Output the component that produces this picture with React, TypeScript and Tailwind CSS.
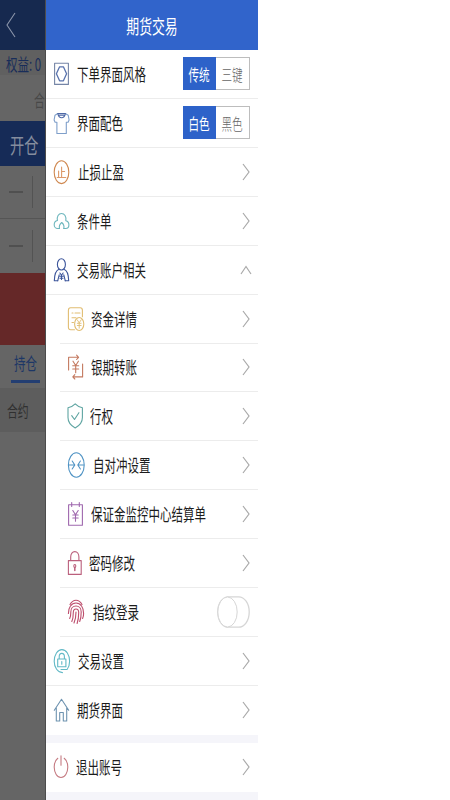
import React from 'react';
import clsx from 'clsx';

const FONT = 'font-["Noto_Sans_CJK_SC",sans-serif]';

/* Every glyph sits in an 18x26 box */
const Glyph: React.FC<{ color: string; children: React.ReactNode }> = ({ color, children }) => (
    <svg
        viewBox="0 0 18 26"
        className={clsx('h-[26px] w-[18px] shrink-0 overflow-visible fill-none', color)}
        stroke="currentColor"
        strokeWidth="1.1"
        strokeLinejoin="round"
        strokeLinecap="round"
    >
        {children}
    </svg>
);

const StyleIcon = () => (
    <Glyph color="text-[#7585a6]">
        <path d="M1.6 2.2h13.8v21.2H1.6z" />
        <path d="M6.6 5.8h3.8l3.2 7-3.2 7H6.6l-3.200-7z" stroke="#5872ad" strokeWidth="1.3" />
    </Glyph>
);

const ShirtIcon = () => (
    <Glyph color="text-[#7f9fca]">
        <path d="M4.800 3.600 2 5.200 1.100 10l1 2.300h1.800v11.200h9.400V12.300h1.800l1-2.300-.9-4.800-2.900-1.600" />
        <path d="M4.800 3.600h7.600c-.6 2.600-2 4.200-3.800 4.200S5.400 6.200 4.800 3.600zM6.300 5.200h4.600" stroke="#4d68a6" />
    </Glyph>
);

const StopIcon = () => (
    <Glyph color="text-[#cf8850]">
        <ellipse cx="8.5" cy="13.2" rx="7.3" ry="11.4" />
        <path d="M8.6 8v10.5M8.6 12.5h3M5.6 12v6.5M4.2 18.5h8.6" stroke="#dd9a6a" />
    </Glyph>
);

const CloudIcon = () => (
    <Glyph color="text-[#6db6bd]">
        <path d="M6.500 20.500H4.600c-1.900 0-3.400-1.500-3.400-3.800 0-2.200 1.200-3.800 3.200-4.200C3.700 8.500 5.500 5.500 8.500 5.500s5 3 4.300 7.200c1.900.4 3.100 1.900 3.100 4 0 2.300-1.400 3.800-3.200 3.800H10.800" />
        <path d="M6.500 20.500c-.6-2.500.3-4.500 2.200-6 1.900 1.500 2.700 3.500 2.100 6" />
    </Glyph>
);

const PersonIcon = () => (
    <Glyph color="text-[#3c559b]">
        <ellipse cx="8.400" cy="7.400" rx="4" ry="5.600" />
        <path d="M6 12.300c-2.800 1-4.500 4-4.700 11.500h3.400M11 12.300c2.800 1 4.500 4 4.700 11.500h-3.400" />
        <path d="m4.700 23.800 1.500-6M12.300 23.800l-1.500-6M6.900 16l1.600 2.300 1.600-2.300M8.500 18.300V22.500M7 19.300h3M7 21.200h3" />
    </Glyph>
);

const FundsIcon = () => (
    <Glyph color="text-[#e1bd72]">
        <path d="M7.500 23.700H3.600c-1.300 0-2.200-.9-2.200-2.500V4.300c0-1.600.9-2.500 2.200-2.500h9.600c1.300 0 2.200.9 2.200 2.500v6.500" />
        <path d="M5 7h1M8 7h5M5 11.800h4M5 16.500h1.500" />
        <ellipse cx="12.200" cy="18" rx="4.600" ry="6.500" />
        <path d="m10.200 13.800 2 3 2-3M12.200 16.800v5.400M10.300 17.300h3.800M10.300 19.500h3.800" strokeWidth=".9" />
    </Glyph>
);

const TransferIcon = () => (
    <Glyph color="text-[#c47a60]">
        <path d="M1.600 16V3.300h9.800M9.600 1.200l2 2.100-2 2.200M15.600 10v12.900H6M7.800 20.700l-2 2.200 2 2.100" />
        <path d="m6 7.200 2.700 4.300 2.700-4.300M8.700 11.500v7.200M5.700 11.800h6M5.700 15h6" />
    </Glyph>
);

const ShieldIcon = () => (
    <Glyph color="text-[#5fa5a2]">
        <path d="M8.200.9C6.300 2.900 3.800 4.200 1 4.800v9.700c0 4.500 3.200 8.300 7.200 10.500 4-2.200 7.200-6 7.200-10.500V4.800C12.600 4.200 10.100 2.900 8.200.9z" />
        <path d="m4.700 12.700 2.800 3.800 4.400-6.800" />
    </Glyph>
);

const HedgeIcon = () => (
    <Glyph color="text-[#4f93c4]">
        <ellipse cx="9.300" cy="13" rx="7.900" ry="12.200" />
        <path d="M2 13h5.600M11 13h5.600M5.200 9l2.600 4-2.600 4M13.400 9l-2.600 4 2.600 4" />
    </Glyph>
);

const BillIcon = () => (
    <Glyph color="text-[#9f68ae]">
        <path d="M1.600 3.800h13.800v20.500H1.600zM4.700 1.500v4M12.300 1.500v4" />
        <path d="m5.800 9.500 2.700 4.300 2.700-4.300M8.500 13.800v6.500M5.800 14h5.400M5.800 17h5.400" />
    </Glyph>
);

const LockIcon = () => (
    <Glyph color="text-[#bb607d]">
        <path d="M1.400 10.600h12.800v13.800H1.400zM3.700 10.600V7c0-3.200 1.700-5.400 4.100-5.400s4.100 2.200 4.100 5.400v3.600" />
        <path d="M7.800 17.500v3" strokeWidth="1.500" />
        <ellipse cx="7.800" cy="16" rx="1" ry="1.500" />
    </Glyph>
);

const FingerprintIcon = () => (
    <Glyph color="text-[#bd4e6d]">
        <path d="M3 5.500C4.500 2.800 6.600 1.200 9 1.200s4.600 1.600 6 4.300M1.400 14.500C1.200 8.500 4.500 4 9 4s7.800 4.500 7.600 10.500c0 2-.3 3.600-1 5" />
        <path d="M2.700 19.500c1.200-2.500 1.100-4.500 1.100-6.500 0-3.500 2.200-6 5.200-6s5.200 2.500 5.200 6c0 4-.4 7-1.500 9.500" />
        <path d="M4.800 22.500c1.300-2.800 1.500-5.500 1.500-9 0-2 1.100-3.500 2.700-3.500s2.700 1.500 2.700 3.500c0 4.500-.5 8-1.600 11M7 24c1.500-3.500 2-7 2-11" />
    </Glyph>
);

const SettingIcon = () => (
    <Glyph color="text-[#62b9c6]">
        <path d="M9.500 24.600C4.800 24.600 1.200 19.500 1.200 13.300 1.200 6.800 4.600 1.600 8.900 1.600s7.700 5.200 7.700 11.700c0 3.400-1 6.200-2.500 8.200H8" />
        <path d="M4.700 11h8.200v7.700H4.700zM6.200 11V8.800c0-2 1-3.400 2.600-3.400s2.600 1.400 2.600 3.400V11M8.800 13.500v2.700" />
    </Glyph>
);

const HomeIcon = () => (
    <Glyph color="text-[#6e93b0]">
        <path d="m1.300 13.300 7.200-11 7.200 11M3.300 11v13h3.400v-8.500h3.600V24h3.400V11" />
    </Glyph>
);

const PowerIcon = () => (
    <Glyph color="text-[#c57b82]">
        <path d="M4.800 4.300C2.600 6 1.200 9.200 1.200 13c0 5.900 3 10.500 6.800 10.500s6.800-4.600 6.800-10.500c0-3.800-1.400-7-3.600-8.700M8 1.800v9.500" />
    </Glyph>
);

interface MenuItem {
    label: string;
    icon: React.FC;
    gap?: string;
    nested?: boolean;
    options?: [string, string];
    end?: 'up' | 'switch';
}

const items: MenuItem[] = [
    { label: '下单界面风格', icon: StyleIcon, options: ['传统', '三键'] },
    { label: '界面配色', icon: ShirtIcon, options: ['白色', '黑色'] },
    { label: '止损止盈', icon: StopIcon, gap: 'ml-[7px]' },
    { label: '条件单', icon: CloudIcon },
    { label: '交易账户相关', icon: PersonIcon, end: 'up' },
    { label: '资金详情', icon: FundsIcon, nested: true },
    { label: '银期转账', icon: TransferIcon, nested: true },
    { label: '行权', icon: ShieldIcon, nested: true, gap: 'ml-[5px]' },
    { label: '自对冲设置', icon: HedgeIcon, nested: true, gap: 'ml-[8px]' },
    { label: '保证金监控中心结算单', icon: BillIcon, nested: true },
    { label: '密码修改', icon: LockIcon, nested: true, gap: 'ml-[4px]' },
    { label: '指纹登录', icon: FingerprintIcon, nested: true, gap: 'ml-[8px]', end: 'switch' },
    { label: '交易设置', icon: SettingIcon, gap: 'ml-[7px]' },
    { label: '期货界面', icon: HomeIcon },
];

const Chevron: React.FC<{ up?: boolean }> = ({ up }) =>
    up ? (
        <svg viewBox="0 0 12 10" className="mr-[6px] h-[10px] w-[12px] shrink-0 fill-none stroke-[#a9a9a9]" strokeWidth="1.2">
            <path d="M1 9 6 1.500 11 9" />
        </svg>
    ) : (
        <svg viewBox="0 0 8 18" className="mr-[8px] h-[18px] w-[8px] shrink-0 fill-none stroke-[#a9a9a9]" strokeWidth="1.2">
            <path d="m1 1 6 8-6 8" />
        </svg>
    );

const Segmented: React.FC<{ options: [string, string] }> = ({ options }) => (
    <div className="mr-[8px] flex h-[33px] w-[67px] shrink-0 border border-[#bdbdbd] text-[16px]">
        <div className="-my-px -ml-px flex w-[33px] items-center justify-center bg-[#2d62c9] text-white">
            <span className="scale-x-[0.66] whitespace-nowrap">{options[0]}</span>
        </div>
        <div className="flex w-[33px] items-center justify-center font-light text-[#666]">
            <span className="scale-x-[0.66] whitespace-nowrap">{options[1]}</span>
        </div>
    </div>
);

const Toggle = () => (
    <svg viewBox="0 0 33 32" className="mr-[8px] h-[32px] w-[33px] shrink-0 fill-white stroke-[#d6d6d6]">
        <rect x=".8" y=".8" width="31.4" height="30.4" rx="10.5" ry="15" strokeWidth="1.3" />
        <ellipse cx="10.5" cy="16" rx="9.7" ry="15" />
    </svg>
);

const Row: React.FC<{ item: MenuItem; line?: boolean }> = ({ item, line = true }) => {
    const Icon = item.icon;
    return (
        <div className={clsx('flex h-[48.93px] shrink-0', item.nested && 'pl-[14px]')}>
            <div className={clsx('flex min-w-0 flex-1 items-center pl-[7px]', line && 'border-b border-[#ececec]')}>
                <Icon />
                <div className={clsx('w-0 min-w-0 flex-1', item.gap ?? 'ml-[6px]')}>
                    <span className="inline-block origin-left scale-x-[0.676] whitespace-nowrap text-[17px] leading-6 text-[#1c1c1c]">
                        {item.label}
                    </span>
                </div>
                {item.options ? <Segmented options={item.options} /> : item.end === 'switch' ? <Toggle /> : <Chevron up={item.end === 'up'} />}
            </div>
        </div>
    );
};

const squeezed = 'inline-block origin-left whitespace-nowrap scale-x-[0.676]';

/* Trading page left visible under the dimmed overlay */
const Backdrop = () => (
    <div className="flex h-full w-[46px] shrink-0 flex-col overflow-hidden border-r border-[#4c4c4c] bg-[#656565]">
        <div className="flex h-[50px] shrink-0 items-center bg-[#16294f] pl-[6px]">
            <svg viewBox="0 0 10 26" className="h-[26px] w-[10px] fill-none stroke-[#8c95aa]" strokeWidth="1.1">
                <path d="M9 1 1 13l8 12" />
            </svg>
        </div>
        <div className="h-[25px] shrink-0 bg-[#606060] pl-[6px] text-[17px] leading-[27px] text-[#192d59]">
            <span className={clsx(squeezed, 'scale-x-[0.64]')}>权益: 0</span>
        </div>
        <div className="h-[46px] shrink-0 pl-[34px] text-[17px] leading-[50px] text-[#484848]">
            <span className="inline-block w-[11px] origin-left scale-x-[0.64]">合</span>
        </div>
        <div className="h-[45px] shrink-0 bg-[#162b57] pl-[10px] text-[21px] leading-[46px] text-[#858d9e]">
            <span className={squeezed}>开仓</span>
        </div>
        <div className="flex h-[53px] shrink-0 items-center border-b border-[#555] pl-[9px]">
            <div className="h-[2px] w-[14px] bg-[#505050]" />
            <div className="ml-[9px] h-[32px] w-px bg-[#535353]" />
        </div>
        <div className="flex h-[54px] shrink-0 items-center pl-[9px]">
            <div className="h-[2px] w-[14px] bg-[#505050]" />
            <div className="ml-[9px] h-[32px] w-px bg-[#535353]" />
        </div>
        <div className="h-[72px] shrink-0 bg-[#652828]" />
        <div className="flex h-[43px] shrink-0 flex-col pl-[14px] text-[17px] leading-[35px] text-[#1d3766]">
            <span className={squeezed}>持仓</span>
            <div className="-ml-[3px] h-[3px] w-[29px] shrink-0 bg-[#233e72]" />
        </div>
        <div className="h-[44px] shrink-0 bg-[#5d5d5d] pl-[7px] text-[16px] leading-[44px] text-[#303030]">
            <span className={squeezed}>合约</span>
        </div>
    </div>
);

export default function App() {
    return (
        <div className={clsx('flex h-[800px] w-[450px] overflow-hidden bg-white', FONT)}>
            <Backdrop />
            <div className="flex h-full w-[212px] flex-col overflow-hidden bg-[#f5f5fa]">
                <header className="flex h-[50px] shrink-0 items-center justify-center bg-[#3164cb] pt-[2px] text-[19px] text-white">
                    <span className="scale-x-[0.676] whitespace-nowrap">期货交易</span>
                </header>
                <div className="bg-white">
                    {items.map((item, i) => (
                        <Row key={item.label} item={item} line={i < items.length - 1} />
                    ))}
                </div>
                <div className="mt-[8px] bg-white">
                    <Row item={{ label: '退出账号', icon: PowerIcon, gap: 'ml-[5px]' }} line={false} />
                </div>
            </div>
        </div>
    );
}
